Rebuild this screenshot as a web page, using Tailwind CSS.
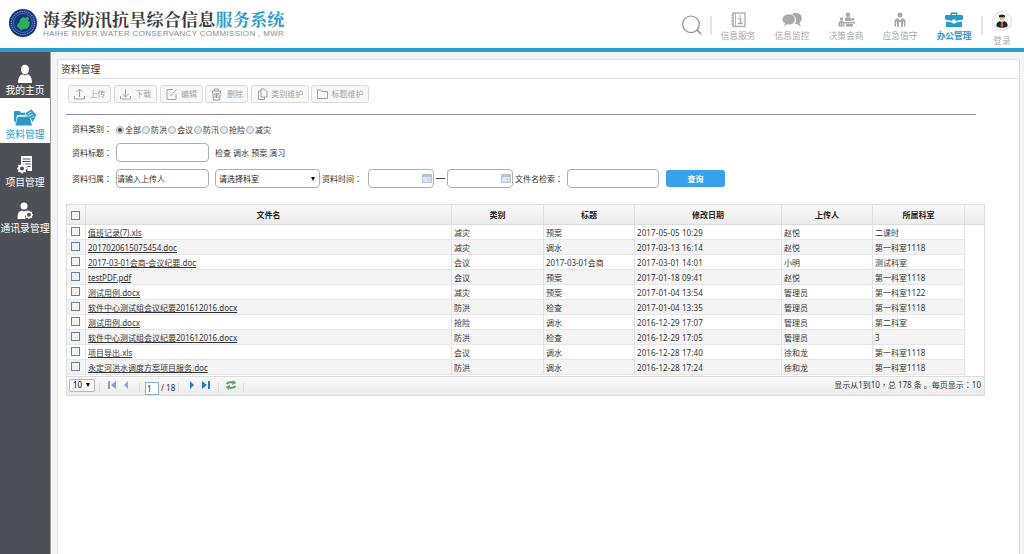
<!DOCTYPE html>
<html>
<head>
<meta charset="utf-8">
<title>资料管理</title>
<script src="https://cdn.jsdelivr.net/npm/@tailwindcss/browser@4"></script>
</head>
<body class="w-[1024px] h-[554px] overflow-hidden bg-[#f4f4f4] font-['Noto_Sans','Noto_Sans_CJK_SC',sans-serif] text-[8px] leading-[12px] text-[#333] whitespace-nowrap">
<header class="h-[52px] bg-white border-b-4 border-[#2c9aca] flex">
  <svg class="w-[28px] h-[28px] ml-[9px] mt-[9px] shrink-0" viewBox="0 0 28 28">
    <circle cx="14" cy="14" r="14" fill="#15357e"/><circle cx="14" cy="14" r="11.6" fill="none" stroke="#8fa5cf" stroke-width="1.2" stroke-dasharray="1.2 1"/>
    <circle cx="14" cy="14" r="9.500" fill="#123680" stroke="#6f8dc5" stroke-width=".6"/>
    <path d="M8.500 15l2-1.500.5-3 3-2.500 2 1 3-1.500 1 2.500-1 2 2 1.500-1 3.500-2 2.500-4 .5-2 1.500-2-2.500-2-1.500z" fill="#2fae5d"/>
  </svg>
  <div class="ml-[6px] w-[620px] pt-[9px]">
    <div class="text-[17px] leading-[19px] tracking-[0.250px] font-bold text-[#3a3a3a] font-['Noto_Serif_CJK_SC','Noto_Sans_CJK_SC',serif]">海委防汛抗旱综合信息<span class="text-[#2d9ccc]">服务系统</span></div>
    <div class="mt-px text-[8px] leading-[10px] tracking-[0.335px] text-[#8c8c8c] font-['Liberation_Sans',sans-serif]">HAIHE RIVER WATER CONSERVANCY COMMISSION , MWR</div>
  </div>
  <svg class="w-[22px] h-[22px] ml-[18px] mt-[14px] shrink-0" viewBox="0 0 22 22" fill="none" stroke="#8e8e8e" stroke-width="1.200"><circle cx="10" cy="10.300" r="8.300"/><path d="M16 16l4 4" stroke-width="1.600"/></svg>
  <div class="w-[2px] h-[19px] bg-[#e4e4e4] mt-[16px] ml-[7px]"></div>
  <nav class="-ml-px flex text-[#a9a9a9] text-[8.700px]">
    <div class="w-[54px] pt-[12px] flex flex-col items-center">
      <svg class="w-[16px] h-[16px]" viewBox="0 0 16 16" fill="none" stroke="currentColor"><rect x="3" y="1" width="12" height="13.500" stroke-width="1.300"/><path d="M1 3h3M1 6h3M1 9h3M1 12h3M5.500 1v13" stroke-width=".9"/><path d="M8.500 6.500h2v5M8 11.500h4.500M9.500 4h1.500" stroke-width="1.400"/></svg>
      <span class="mt-[2px]">信息服务</span></div>
    <div class="w-[54px] pt-[12px] flex flex-col items-center">
      <svg class="w-[20px] h-[16px]" viewBox="0 0 20 16" fill="currentColor"><path d="M13.500 1c4 0 6.300 2.300 6.300 5.300 0 2-1 3.500-2.300 4.200l1.300 4-4-2.500-1.800-.1c2-3.500 1-7.500-3-9.400C11 1.200 12 1 13.500 1z"/><path d="M7 2c3.700 0 6.200 2.400 6.200 5.400s-2.500 5.400-6.200 5.400l-1.800-.2-3.700 2.400 1.200-3.800C1.200 10.300.3 9 .3 7.400.3 4.400 3.300 2 7 2z" stroke="white" stroke-width=".6"/></svg>
      <span class="mt-[2px]">信息监控</span></div>
    <div class="w-[54px] pt-[12px] flex flex-col items-center">
      <svg class="w-[18px] h-[16px]" viewBox="0 0 18 16" fill="currentColor"><circle cx="11" cy="2.700" r="2.200"/><path d="M8 9V6.500Q8.500 5 11 5t3.500 1.500V9zM7.500 10H18v1.500H7.500zM9 12h7v2.500H9z"/><circle cx="4.500" cy="7" r="1.700"/><path d="M1.500 14.500v-4Q2 9 4.500 9t3 1.500v4H6V11h-.5v4h-2v-4H3v3.500z"/><circle cx="16" cy="7.500" r="1.400"/></svg>
      <span class="mt-[2px]">决策会商</span></div>
    <div class="w-[54px] pt-[12px] flex flex-col items-center">
      <svg class="w-[16px] h-[16px]" viewBox="0 0 16 16" fill="currentColor"><circle cx="8" cy="3" r="2.500"/><path d="M2.500 14.500V9Q3 6.500 6 6l2 2.500L10 6q3 .5 3.500 3v5.500H12V9.500h-1v5.500H9V10H7v5H5V9.500H4v5z"/></svg>
      <span class="mt-[2px]">应急值守</span></div>
    <div class="w-[54px] pt-[12px] flex flex-col items-center text-[#2b9acb] font-bold">
      <svg class="w-[18px] h-[16px]" viewBox="0 0 18 16" fill="currentColor"><path d="M5.500 3V1.500Q5.500.5 6.500.5h5q1 0 1 1V3H17q1 0 1 1v3.500L10.500 9V7.500h-3V9L0 7.500V4q0-1 1-1zm1.500 0h4V2H7zM1 9.500l6.500 1v1h3v-1l6.500-1v5.500H1z"/></svg>
      <span class="mt-[2px]">办公管理</span></div>
  </nav>
  <div class="w-[2px] h-[19px] bg-[#e4e4e4] mt-[16px]"></div>
  <div class="ml-[9px] pt-[11px] flex flex-col items-center text-[8.700px] text-[#a9a9a9]">
    <svg class="w-[20px] h-[20px]" viewBox="0 0 20 20"><circle cx="10" cy="10" r="9.500" fill="#fafafa" stroke="#ddd"/><circle cx="10" cy="7" r="2.500" fill="#e7b98c"/><path d="M7 6.200V5q0-1.500 3-1.500T13 5v1.200z" fill="#222"/><path d="M4.500 15.500v-2.500Q5 10.800 8 10l2 2 2-2q3 .8 3.500 3v2.500Q10 18 4.500 15.500z" fill="#1d2636"/><path d="M9.300 10.500h1.400l.5 4-1.200 2-1.200-2z" fill="#d9642b"/></svg>
    <span class="mt-[4px]">登录</span>
  </div>
</header>

<div class="flex h-[502px]">
  <aside class="w-[51px] shrink-0 bg-[#4d5157] border-r border-[#9b9b9b] text-white text-[9.800px] leading-[12px]">
    <div class="h-[46px] pt-[12px] flex flex-col items-center">
      <svg class="w-[16px] h-[20px]" viewBox="0 0 16 20" fill="currentColor"><ellipse cx="8" cy="5.500" rx="4" ry="4.800"/><path d="M1 19q0-7.500 4.500-8.800L8 11.500l2.500-1.300Q15 11.500 15 19z"/></svg>
      <span class="mt-px">我的主页</span></div>
    <div class="h-[45px] pt-[11px] bg-white text-[#2b9acb] flex flex-col items-center">
      <svg class="w-[24px] h-[18px]" viewBox="0 0 24 18" fill="currentColor"><path d="M12.500 4l6-3.500L23.500 6l-4 7-2.500-5h-3z"/><path d="M14.500 5l4-2M16 7l4-2M18.500 9l3-2" stroke="white" stroke-width=".8"/><path d="M1 13.500V3q0-1 1-1h4.500L8 3.800h4V6H4.500z"/><path d="M5 7.500h11.500L19 16.500H3L1.500 11z"/><path d="M2.500 15L4.500 7h12" fill="none" stroke="white" stroke-width=".7"/></svg>
      <span class="mt-[2px]">资料管理</span></div>
    <div class="h-[48px] pt-[12px] flex flex-col items-center">
      <svg class="w-[18px] h-[19px]" viewBox="0 0 18 19" fill="currentColor"><path d="M5 1h11v15h-4.500v-2.500L8 9.500H5z"/><path d="M6.500 4h8M6.500 6.500h8M9 9h5.500M11.500 11.500h3" stroke="#4d5157" stroke-width="1"/><circle cx="6" cy="13.500" r="3" fill="none" stroke="currentColor" stroke-width="2"/><path d="M6 8.500v2M6 16.500v2M1 13.500h2M9 13.500h2M2.500 10l1.500 1.500M8 15.500l1.500 1.500M2.500 17L4 15.500M8 11.500L9.500 10" stroke="currentColor" stroke-width="1.500"/><circle cx="6" cy="13.500" r="1.600" fill="#4d5157"/></svg>
      <span class="mt-[3px]">项目管理</span></div>
    <div class="h-[48px] pt-[11px] flex flex-col items-center">
      <svg class="w-[18px] h-[18px]" viewBox="0 0 18 18" fill="currentColor"><circle cx="8" cy="4" r="3.500"/><path d="M1.500 17Q1 9 6 8.500l2 1 2.500-1L13 9q-5 2-3.500 8z"/><circle cx="13" cy="12.800" r="2.600" fill="none" stroke="currentColor" stroke-width="1.300"/><path d="M13 8.700v1.500M13 15.400v1.500M8.900 12.800h1.500M15.600 12.800h1.500M10.100 9.900l1 1M14.900 14.700l1 1M10.100 15.700l1-1M14.900 10.900l1-1" stroke="currentColor" stroke-width="1.300"/></svg>
      <span class="mt-[3px]">通讯录管理</span></div>
  </aside>

  <main class="ml-[6px] mt-[7px] w-[963px] border border-b-0 border-[#dedede] bg-white">
    <h1 class="h-[19px] border-b border-[#e2e2e2] pl-[3px] text-[9.800px] leading-[20px]">资料管理</h1>
    <div class="mt-[6px] ml-[10px] flex gap-[2.800px] text-[#a3a3a3]" id="tools"></div>
    <div class="mt-[11px] ml-[8px] w-[910px] h-px bg-[#888b90]"></div>

    <div class="ml-[14px] mt-[8px] flex items-center h-[12px]">
      <span class="w-[44px]">资料类别<span class="font-['Noto_Sans_CJK_TC']" lang="zh-TW">：</span></span>
      <div class="flex items-center pt-px" id="radios"></div>
    </div>
    <div class="ml-[14px] mt-[8px] flex items-center h-[19px]">
      <span class="w-[44px]">资料标题<span class="font-['Noto_Sans_CJK_TC']" lang="zh-TW">：</span></span>
      <input class="w-[92.500px] h-[19px] border border-[#aab0b8] rounded-[4px]">
      <span class="ml-[6.500px]">检查 调水 预案 演习</span>
    </div>
    <div class="ml-[14px] mt-[7px] flex items-center h-[19px]">
      <span class="w-[44px]">资料归属<span class="font-['Noto_Sans_CJK_TC']" lang="zh-TW">：</span></span>
      <div class="w-[93px] h-[19px] border border-[#aab0b8] rounded-[4px] leading-[18px]">请输入上传人</div>
      <div class="ml-[6px] w-[105px] h-[19px] border border-[#aab0b8] rounded-[4px] leading-[18px] flex items-center justify-between pl-[3px] pr-[4px] text-[#222]">请选择科室<i class="border-x-[2px] border-t-[4px] border-x-transparent border-t-black"></i></div>
      <span class="ml-[2px] w-[46px]">资料时间<span class="font-['Noto_Sans_CJK_TC']" lang="zh-TW">：</span></span>
      <div class="w-[66px] h-[19px] border border-[#aab0b8] rounded-[4px] flex items-center justify-end pr-px"><svg class="w-[10px] h-[9px]" viewBox="0 0 10 9"><rect x=".5" y=".5" width="9" height="8" fill="#dce9f4" stroke="#b3c3d4"/><path d="M1 1h8v2H1z" fill="#a9c4e4"/><path d="M5.500 4.500h3v3h-3z" fill="#eed3a0"/></svg></div>
      <div class="w-[9px] mx-[2px] h-px bg-[#444]"></div>
      <div class="w-[66px] h-[19px] border border-[#aab0b8] rounded-[4px] flex items-center justify-end pr-px"><svg class="w-[10px] h-[9px]" viewBox="0 0 10 9"><rect x=".5" y=".5" width="9" height="8" fill="#dce9f4" stroke="#b3c3d4"/><path d="M1 1h8v2H1z" fill="#a9c4e4"/><path d="M5.500 4.500h3v3h-3z" fill="#eed3a0"/></svg></div>
      <span class="ml-[2px] w-[52px]">文件名检索<span class="font-['Noto_Sans_CJK_TC']" lang="zh-TW">：</span></span>
      <input class="w-[92px] h-[19px] border border-[#aab0b8] rounded-[4px]">
      <button class="ml-[7px] w-[59px] h-[17px] rounded-[3px] bg-[#38a1ec] text-white font-bold leading-[16px]">查询</button>
    </div>

    <section class="ml-[8px] mt-[16px] w-[919px] border border-[#dcdcdc]">
      <div class="grid grid-cols-[19px_366px_92px_91px_147px_91px_92px_19px] h-[20px] border-b border-[#dcdcdc] bg-linear-to-b from-[#f9f9f9] to-[#ececec] font-bold text-[#222] leading-[20px] text-center">
        <div class="border-r border-[#dfdfdf] pl-[4px] pt-[6px]"><i class="block w-[9px] h-[9px] border border-[#5f83ab] bg-[#f3f3f3]"></i></div>
        <div class="border-r border-[#dfdfdf]">文件名</div><div class="border-r border-[#dfdfdf]">类别</div><div class="border-r border-[#dfdfdf]">标题</div><div class="border-r border-[#dfdfdf]">修改日期</div><div class="border-r border-[#dfdfdf]">上传人</div><div class="border-r border-[#dfdfdf]">所属科室</div><div></div>
      </div>
      <div id="rows" class="h-[151px]"></div>
      <div class="h-[19px] border-t border-[#dcdcdc] bg-linear-to-b from-[#fafafa] to-[#ebebeb] flex items-center pr-[3px] pl-[2px]">
        <div class="w-[26px] h-[13px] mb-[2px] border border-[#b5b5b5] rounded-[2px] bg-[#f8f8f8] flex items-center justify-between pl-[3px] pr-[4px] text-black">10<i class="border-x-[2px] border-t-[4px] border-x-transparent border-t-black"></i></div>
        <i class="w-px h-[9px] bg-[#dadada] ml-[4px] mt-[2px]"></i>
        <svg class="ml-[8px] mb-[3px] w-[8px] h-[8px]" viewBox="0 0 8 8" fill="#7ba3d0"><path d="M0 0h2v8H0zM8 0v8L3 4z"/></svg>
        <svg class="ml-[7px] mb-[3px] w-[6px] h-[8px]" viewBox="0 0 6 8" fill="#86abd4"><path d="M5 0v8L1 4z"/></svg>
        <i class="w-px h-[9px] bg-[#dadada] ml-[10px] mt-[3px]"></i>
        <div class="ml-[5px] mt-[4px] w-[14px] h-[13px] border border-[#8fb0dc] bg-white pl-px leading-[12px]">1</div>
        <span class="ml-[2px] mt-[4px]">/ 18</span>
        <i class="w-px h-[9px] bg-[#dadada] ml-[3px] mt-[3px]"></i>
        <svg class="ml-[10px] mb-[3px] w-[6px] h-[8px]" viewBox="0 0 6 8" fill="#2b78c5"><path d="M1 0v8l4-4z"/></svg>
        <svg class="ml-[7px] mb-[3px] w-[8px] h-[8px]" viewBox="0 0 8 8" fill="#2b78c5"><path d="M6 0h2v8H6zM0 0v8l5-4z"/></svg>
        <i class="w-px h-[9px] bg-[#dadada] ml-[8px] mt-[3px]"></i>
        <svg class="ml-[6px] mb-[3px] w-[12px] h-[10px]" viewBox="0 0 12 10" fill="none" stroke="#5aa565" stroke-width="2"><path d="M1.500 4Q3 1.500 8 2.500M10.500 6Q9 8.500 4 7.500"/><path d="M8 0l3.500 3L7 5zM4 10L.5 7 5 5z" fill="#5aa565" stroke="none"/></svg>
        <i class="w-px h-[9px] bg-[#dadada] ml-[6px] mt-[3px]"></i>
        <span class="ml-auto mb-[3px]">显示从1到10<span class="font-['Noto_Sans_CJK_TC']" lang="zh-TW">，</span>总 178 条 。每页显示<span class="font-['Noto_Sans_CJK_TC']" lang="zh-TW">：</span>10</span>
      </div>
    </section>
  </main>
</div>

<script>
const tools = [
  ['上传', 'w-[43px]', 'M1.500 8v3h10V8M6.500 9V1M3.500 4l3-3 3 3'],
  ['下载', 'w-[43px]', 'M1.500 8v3h10V8M6.500 1v8M3.500 6l3 3 3-3'],
  ['编辑', 'w-[43px]', 'M8 1.500H2v10h9V6M5.500 8l6-6.500'],
  ['删除', 'w-[43px]', 'M1.500 3h10M4.500 3V1h4v2M2.500 3l1 9h6l1-9M5 5v5M6.500 5v5M8 5v5'],
  ['类别维护', 'w-[57.500px]', 'M5 1h3.500L11 3.500V9H5zM5 3H2.500v8.500h6V9'],
  ['标题维护', 'w-[57.500px]', 'M1.500 10.500V2H5l1 1.500h5.500v7z']
];
document.getElementById('tools').innerHTML = tools.map(([t, w, d]) =>
  `<button class="${w} h-[18px] border border-[#d9d9d9] rounded-[3px] bg-[#f8f8f8] flex items-center justify-between pl-[4px] pr-[4.500px]"><svg class="w-[13px] h-[13px] shrink-0" viewBox="0 0 13 13" fill="none" stroke="#a0a0a0" stroke-width="1"><path d="${d}"/></svg><span>${t}</span></button>`).join('');

document.getElementById('radios').innerHTML = ['全部', '防洪', '会议', '防汛', '抢险', '减灾'].map((t, i) =>
  `<label class="w-[26px] flex items-center gap-[1px]"><i class="w-[8px] h-[8px] shrink-0 rounded-full border border-[#aaa] bg-[#e9e9e9] flex items-center justify-center">${i ? '' : '<i class="w-[4px] h-[4px] rounded-full bg-[#444]"></i>'}</i>${t}</label>`).join('');

const rows = [
  ['值班记录(7).xls', '减灾', '预案', '2017-05-05 10:29', '赵悦', '二课时'],
  ['2017020615075454.doc', '减灾', '调水', '2017-03-13 16:14', '赵悦', '第一科室1118'],
  ['2017-03-01会商-会议纪要.doc', '会议', '2017-03-01会商', '2017-03-01 14:01', '小明', '测试科室'],
  ['testPDF.pdf', '会议', '预案', '2017-01-18 09:41', '赵悦', '第一科室1118'],
  ['测试用例.docx', '减灾', '预案', '2017-01-04 13:54', '管理员', '第一科室1122'],
  ['软件中心测试组会议纪要201612016.docx', '防洪', '检查', '2017-01-04 13:35', '管理员', '第一科室1118'],
  ['测试用例.docx', '抢险', '调水', '2016-12-29 17:07', '管理员', '第二科室'],
  ['软件中心测试组会议纪要201612016.docx', '防洪', '检查', '2016-12-29 17:05', '管理员', '3'],
  ['项目导出.xls', '会议', '调水', '2016-12-28 17:40', '徐和龙', '第一科室1118'],
  ['永定河洪水调度方案项目服务.doc', '防洪', '调水', '2016-12-28 17:24', '徐和龙', '第一科室1118']
];
document.getElementById('rows').innerHTML = rows.map((r, i) =>
  `<div class="grid grid-cols-[19px_366px_92px_91px_147px_91px_92px] w-[898px] h-[15.060px] border-b border-[#e6e6e6] leading-[15px] ${i % 2 ? 'bg-[#f4f4f4]' : 'bg-white'}"><div class="border-r border-[#e2e2e2] pl-[4px] pt-[2px]"><i class="block w-[9px] h-[9px] border border-[#5f83ab] bg-[#f3f3f3]"></i></div>` +
  r.map((c, k) => `<div class="border-r border-[#e2e2e2] pl-[2px] h-[14px] ${k === 3 ? 'tracking-[0.100px]' : ''}">${k ? c : `<a class="underline underline-offset-1">${c}</a>`}</div>`).join('') + '</div>').join('');
</script>
</body>
</html>
